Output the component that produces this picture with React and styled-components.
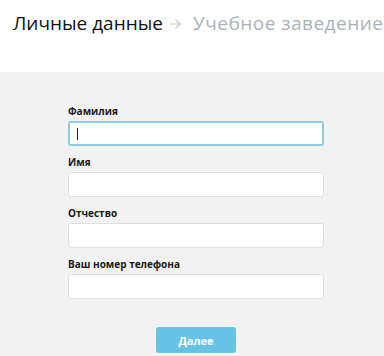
import React from 'react';
import styled, { createGlobalStyle } from 'styled-components';

const GlobalStyle = createGlobalStyle`
  html, body {
    margin: 0;
    padding: 0;
    background: #fff;
  }
  body {
    font-family: 'Open Sans', 'Noto Sans', sans-serif;
  }
`;

const Root = styled.div`
  width: 384px;
  height: 356px;
  overflow: hidden;
  display: flex;
  flex-direction: column;
`;

const Header = styled.div`
  height: 72px;
  background: #fff;
  padding: 9px 0 0 13px;
  box-sizing: border-box;
  display: flex;
  align-items: flex-start;
  white-space: nowrap;
`;

const Step = styled.span`
  font-size: 19px;
  line-height: 28px;
  letter-spacing: ${({ active }) => (active ? '0' : '0.5px')};
  color: ${({ active }) => (active ? '#111' : '#a7b3ba')};
`;

const Arrow = styled.svg`
  margin: 10px 12px 0 7px;
  flex: none;
`;

const Body = styled.div`
  flex: 1;
  background: #f2f2f2;
  display: flex;
  flex-direction: column;
  align-items: center;
  padding: 34px 0 0 8px;
`;

const Form = styled.form`
  width: 256px;
  display: flex;
  flex-direction: column;
  gap: 11px;
`;

const Field = styled.label`
  display: flex;
  flex-direction: column;
  gap: 4px;
`;

const Label = styled.span`
  font-size: 10px;
  line-height: 11px;
  font-weight: 700;
  color: #1a1a1a;
`;

const Input = styled.div`
  height: 25px;
  box-sizing: border-box;
  background: #fff;
  border: ${({ focused }) => (focused ? '2px solid #90cbe8' : '1px solid #e0e0e0')};
  border-radius: 3px;
  display: flex;
  align-items: center;
  padding-left: 7px;
`;

const Caret = styled.span`
  width: 1px;
  height: 12px;
  background: #222;
`;

const Button = styled.button`
  align-self: center;
  margin-top: 28px;
  width: 80px;
  height: 26px;
  border: none;
  border-radius: 3px;
  background: #66c3e6;
  color: #fff;
  font-family: 'Open Sans', 'Noto Sans', sans-serif;
  font-size: 11px;
  font-weight: 700;
`;

const fields = ['Фамилия', 'Имя', 'Отчество', 'Ваш номер телефона'];

export default function App() {
  return (
    <Root>
      <GlobalStyle />
      <Header>
        <Step active>Личные данные</Step>
        <Arrow width="11" height="10" viewBox="0 0 11 10">
          <path d="M0 5h10M5.5 0.5L10 5l-4.5 4.5" fill="none" stroke="#c3cacf" strokeWidth="1.2" />
        </Arrow>
        <Step>Учебное заведение</Step>
      </Header>
      <Body>
        <Form>
          {fields.map((name, i) => (
            <Field key={name}>
              <Label>{name}</Label>
              <Input focused={i === 0}>{i === 0 && <Caret />}</Input>
            </Field>
          ))}
        </Form>
        <Button>Далее</Button>
      </Body>
    </Root>
  );
}
